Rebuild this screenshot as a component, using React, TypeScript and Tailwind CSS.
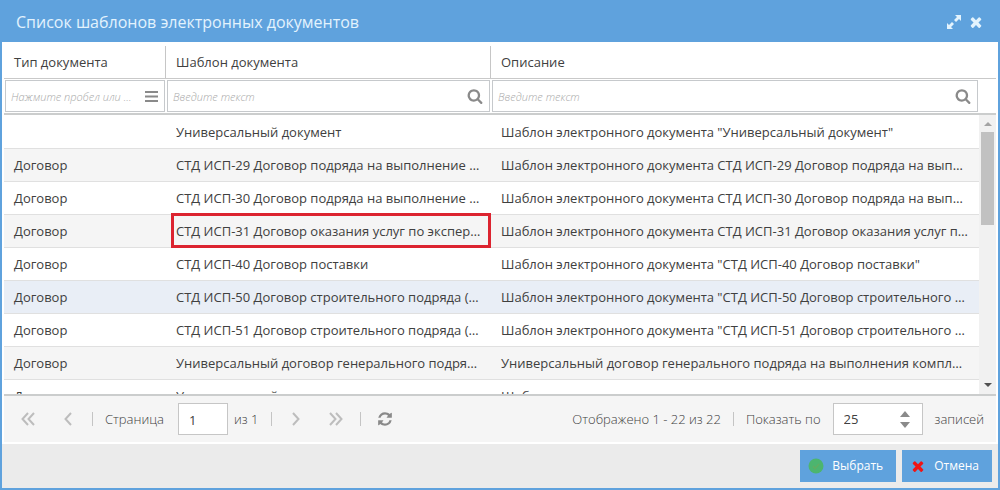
import { useState } from "react";
import type { ReactNode } from "react";

type Template = {
  type: string;
  name: string;
  description: string;
};

const templates: Template[] = [
  {
    type: "",
    name: "Универсальный документ",
    description: 'Шаблон электронного документа "Универсальный документ"',
  },
  {
    type: "Договор",
    name: "СТД ИСП-29 Договор подряда на выполнение работ",
    description: "Шаблон электронного документа СТД ИСП-29 Договор подряда на выполнение работ",
  },
  {
    type: "Договор",
    name: "СТД ИСП-30 Договор подряда на выполнение работ",
    description: "Шаблон электронного документа СТД ИСП-30 Договор подряда на выполнение работ",
  },
  {
    type: "Договор",
    name: "СТД ИСП-31 Договор оказания услуг по экспертизе",
    description: "Шаблон электронного документа СТД ИСП-31 Договор оказания услуг по экспертизе",
  },
  {
    type: "Договор",
    name: "СТД ИСП-40 Договор поставки",
    description: 'Шаблон электронного документа "СТД ИСП-40 Договор поставки"',
  },
  {
    type: "Договор",
    name: "СТД ИСП-50 Договор строительного подряда (работы)",
    description: 'Шаблон электронного документа "СТД ИСП-50 Договор строительного подряда"',
  },
  {
    type: "Договор",
    name: "СТД ИСП-51 Договор строительного подряда (работы)",
    description: 'Шаблон электронного документа "СТД ИСП-51 Договор строительного подряда"',
  },
  {
    type: "Договор",
    name: "Универсальный договор генерального подряда",
    description: "Универсальный договор генерального подряда на выполнения комплекса работ",
  },
  { type: "Договор", name: "Универсальный", description: "Шаблон" },
];

const MARKED_ROW = 3;

const TIMES =
  "M1490 1322q0 40-28 68l-136 136q-28 28-68 28t-68-28l-294-294-294 294q-28 28-68 28t-68-28l-136-136q-28-28-28-68t28-68l294-294-294-294q-28-28-28-68t28-68l136-136q28-28 68-28t68 28l294 294 294-294q28-28 68-28t68 28l136 136q28 28 28 68t-28 68l-294 294 294 294q28 28 28 68z";
const SEARCH =
  "M1216 832q0-185-131.5-316.5t-316.5-131.5-316.5 131.5-131.5 316.5 131.5 316.5 316.5 131.5 316.5-131.5 131.5-316.5zm512 832q0 52-38 90t-90 38q-54 0-90-38l-343-342q-179 124-399 124-143 0-273.5-55.5t-225-150-150-225-55.5-273.5 55.5-273.5 150-225 225-150 273.5-55.5 273.5 55.5 225 150 150 225 55.5 273.5q0 220-124 399l343 343q37 37 37 90z";
const REFRESH =
  "M1639 1056q0 5-1 7-64 268-268 434.5t-478 166.5q-146 0-282.5-55t-243.5-157l-129 129q-19 19-45 19t-45-19-19-45v-448q0-26 19-45t45-19h448q26 0 45 19t19 45-19 45l-137 137q71 66 161 102t187 36q134 0 250-65t186-179q11-17 53-117 8-23 30-23h192q13 0 22.5 9.5t9.5 22.5zm25-800v448q0 26-19 45t-45 19h-448q-26 0-45-19t-19-45 19-45l138-138q-148-137-349-137-134 0-250 65t-186 179q-11 17-53 117-8 23-30 23h-199q-13 0-22.5-9.5t-9.5-22.5v-7q65-268 270-434.5t480-166.5q146 0 284 55.5t245 156.5l130-129q19-19 45-19t45 19 19 45z";

const Glyph = ({ d, className }: { d: string; className: string }) => (
  <svg viewBox="0 0 1792 1792" fill="currentColor" className={className} aria-hidden="true">
    <path d={d} />
  </svg>
);

const ExpandIcon = () => (
  <svg viewBox="0 0 16 16" className="size-4" fill="currentColor" aria-hidden="true">
    <path d="M9 1h6v6l-2-2-3 3-2-2 3-3zM1 15V9l2 2 3-3 2 2-3 3 2 2z" />
  </svg>
);

const BarsIcon = () => (
  <svg viewBox="0 0 13 11" className="h-[11px] w-[13px]" fill="currentColor" aria-hidden="true">
    <path d="M0 0h13v2H0zM0 4.500h13v2H0zM0 9h13v2H0z" />
  </svg>
);

const CheckCircleIcon = () => (
  <svg viewBox="0 0 16 16" className="size-4" aria-hidden="true">
    <circle cx="8" cy="8" r="7.5" fill="#4cb56f" />
    <path d="M5 8l2 2.500 4-4.500" fill="none" stroke="#62ad62" strokeWidth="1.500" />
  </svg>
);

const PageArrow = ({ label, d }: { label: string; d: string }) => (
  <button type="button" aria-label={label} className="flex size-6 items-center justify-center text-[#bdbdbd]">
    <svg viewBox="0 0 14 14" className="size-[14px]" fill="none" stroke="currentColor" strokeWidth="2" aria-hidden="true">
      <path d={d} />
    </svg>
  </button>
);

const Separator = () => <span className="h-[14px] w-px shrink-0 bg-[#c4c4c4]" />;

const Columns = () => (
  <colgroup>
    <col className="w-[162px]" />
    <col className="w-[325px]" />
    <col />
  </colgroup>
);

type FilterProps = {
  label: string;
  placeholder: string;
  children: ReactNode;
};

const Filter = ({ label, placeholder, children }: FilterProps) => {
  const [value, setValue] = useState("");

  return (
    <div className="flex h-8 items-center border border-[#c6c9cc] bg-white pr-[6px] pl-[5px]">
      <input
        type="text"
        aria-label={label}
        value={value}
        onChange={e => setValue(e.target.value)}
        placeholder={placeholder}
        className="min-w-0 flex-1 pt-[2px] text-[11px] font-light text-ellipsis italic placeholder:text-[#a8a8a8] focus:outline-none"
      />
      <button type="button" aria-label={label} className="ml-3 flex shrink-0 text-[#8a8a8a]">
        {children}
      </button>
    </div>
  );
};

const TemplateGrid = () => {
  const [selected, setSelected] = useState(5);

  const rowColor = (index: number) => {
    if (index === selected) return "bg-[#e9eef6]";
    return index % 2 ? "bg-[#f5f5f5]" : "bg-white";
  };

  return (
    <div className="flex min-h-0 flex-1 flex-col bg-white px-[2px]">
      <div className="border-b-2 border-[#cbcdcd] pr-[17px]">
        <table className="w-full table-fixed border-collapse">
          <Columns />
          <thead>
            <tr className="h-9 text-left text-[13px] text-[#404040]">
              {["Тип документа", "Шаблон документа", "Описание"].map(title => (
                <th key={title} scope="col" className="group p-0 pt-1 font-normal">
                  <div className="flex h-8 items-center border-r border-[#c6c6c6] px-[10px] pt-[2px] group-last:border-r-0">
                    {title}
                  </div>
                </th>
              ))}
            </tr>
          </thead>
        </table>
        <div className="-mr-[17px] h-px bg-[#c9c9c9]" />
        <div className="grid grid-cols-[162px_325px_1fr] py-px">
          <div className="px-px">
            <Filter label="Тип документа" placeholder="Нажмите пробел или начните ввод">
              <BarsIcon />
            </Filter>
          </div>
          <div className="px-px">
            <Filter label="Шаблон документа" placeholder="Введите текст">
              <Glyph d={SEARCH} className="size-4" />
            </Filter>
          </div>
          <div className="px-px">
            <Filter label="Описание" placeholder="Введите текст">
              <Glyph d={SEARCH} className="size-4" />
            </Filter>
          </div>
        </div>
      </div>

      <div className="flex min-h-0 flex-1 border-b-2 border-[#cbcdcd]">
        <div className="min-w-0 flex-1 overflow-hidden pt-px">
          <table className="w-full table-fixed border-separate border-spacing-0 text-[13px] text-[#404040]">
            <Columns />
            <tbody>
              {templates.map((template, index) => (
                <tr key={index} onClick={() => setSelected(index)} className={rowColor(index)}>
                  <td className="h-[33px] truncate border-b border-[#e0e0e0] px-[10px] pt-[2px] pb-0">
                    {template.type}
                  </td>
                  <td className="relative h-[33px] border-b border-[#e0e0e0] px-[10px] pt-[2px] pb-0">
                    <div className="truncate">{template.name}</div>
                    {index === MARKED_ROW && (
                      <span className="pointer-events-none absolute -top-[2px] right-0 -bottom-px left-[5px] border-3 border-[#dc2430]" />
                    )}
                  </td>
                  <td className="h-[33px] truncate border-b border-[#e0e0e0] px-[10px] pt-[2px] pb-0">
                    {template.description}
                  </td>
                </tr>
              ))}
            </tbody>
          </table>
        </div>
        <div className="flex w-[17px] flex-col items-center bg-[#f1f1f1]">
          <svg viewBox="0 0 16 17" className="h-[17px] w-4 shrink-0" aria-hidden="true">
            <path d="M4 11l4-4 4 4z" fill="#a3a3a3" />
          </svg>
          <div className="w-full flex-1 px-[2px]">
            <div className="h-[38%] min-h-6 bg-[#c1c1c1]" />
          </div>
          <svg viewBox="0 0 16 17" className="h-[17px] w-4 shrink-0" aria-hidden="true">
            <path d="M4 6h8l-4 4z" fill="#505050" />
          </svg>
        </div>
      </div>
    </div>
  );
};

const PagingBar = () => {
  const [page, setPage] = useState("1");
  const [pageSize, setPageSize] = useState(25);

  return (
    <div className="mx-[2px] flex h-[46px] shrink-0 items-center justify-between bg-[#f5f5f5] px-3 text-[13px] font-light text-[#404040]">
      <div className="flex items-center">
        <PageArrow label="Первая страница" d="M7 1L1.500 7 7 13M13 1L7.500 7 13 13" />
        <span className="ml-4 flex">
          <PageArrow label="Предыдущая страница" d="M10 1L4.500 7 10 13" />
        </span>
        <span className="ml-3 flex">
          <Separator />
        </span>
        <label htmlFor="page" className="ml-3 pt-[2px]">
          Страница
        </label>
        <input
          id="page"
          type="text"
          value={page}
          onChange={e => setPage(e.target.value)}
          className="ml-[14px] h-8 w-[50px] border border-[#c6c6c6] bg-white px-[10px] pt-[2px] font-normal focus:outline-none"
        />
        <span className="mr-[13px] ml-[6px] pt-[2px]">из 1</span>
        <Separator />
        <span className="ml-3 flex">
          <PageArrow label="Следующая страница" d="M4 1l5.500 6L4 13" />
        </span>
        <span className="mr-3 ml-4 flex">
          <PageArrow label="Последняя страница" d="M1 1l5.500 6L1 13M7 1l5.500 6L7 13" />
        </span>
        <Separator />
        <button type="button" aria-label="Обновить" className="ml-4 flex text-[#8a8a8a]">
          <Glyph d={REFRESH} className="size-4" />
        </button>
      </div>

      <div className="flex items-center">
        <span className="mr-3 pt-[2px]">Отображено 1 - 22 из 22</span>
        <Separator />
        <label htmlFor="page-size" className="ml-3 pt-[2px]">
          Показать по
        </label>
        <div className="mx-3 flex h-8 w-[90px] items-center border border-[#c6c6c6] bg-white pr-3 pl-[10px]">
          <input
            id="page-size"
            type="text"
            value={pageSize}
            onChange={e => setPageSize(Number(e.target.value) || 0)}
            className="min-w-0 flex-1 pt-[2px] font-normal focus:outline-none"
          />
          <div className="flex flex-col gap-[5px] text-[#8a8a8a]">
            <button type="button" aria-label="Больше" onClick={() => setPageSize(pageSize + 1)}>
              <svg viewBox="0 0 10 6" className="h-[6px] w-[10px]" fill="currentColor" aria-hidden="true">
                <path d="M0 6l5-6 5 6z" />
              </svg>
            </button>
            <button type="button" aria-label="Меньше" onClick={() => setPageSize(pageSize - 1)}>
              <svg viewBox="0 0 10 6" className="h-[6px] w-[10px]" fill="currentColor" aria-hidden="true">
                <path d="M0 0h10L5 6z" />
              </svg>
            </button>
          </div>
        </div>
        <span className="pt-[2px]">записей</span>
      </div>
    </div>
  );
};

export default function App() {
  return (
    <div className="flex h-screen flex-col border-x-2 border-b-2 border-[#5fa2dd] bg-white font-['Open_Sans',sans-serif]">
      <header className="flex h-[42px] shrink-0 items-center bg-[#5fa2dd] px-[14px] pt-px text-[#e3f3fd]">
        <h1 className="flex-1 text-base font-medium">Список шаблонов электронных документов</h1>
        <button type="button" aria-label="Развернуть" className="flex">
          <ExpandIcon />
        </button>
        <button type="button" aria-label="Закрыть" className="ml-[6px] flex">
          <Glyph d={TIMES} className="size-4" />
        </button>
      </header>

      <TemplateGrid />
      <PagingBar />

      <footer className="mt-[2px] flex h-11 shrink-0 items-center justify-end gap-[6px] bg-[#ebebeb] px-[6px] text-xs text-white">
        <button type="button" className="flex h-8 items-center gap-2 bg-[#5fa2dd] pr-[13px] pl-2">
          <CheckCircleIcon />
          Выбрать
        </button>
        <button type="button" className="flex h-8 items-center gap-2 bg-[#5fa2dd] pr-[13px] pl-2">
          <Glyph d={TIMES} className="size-4 text-[#f01414]" />
          Отмена
        </button>
      </footer>
    </div>
  );
}
